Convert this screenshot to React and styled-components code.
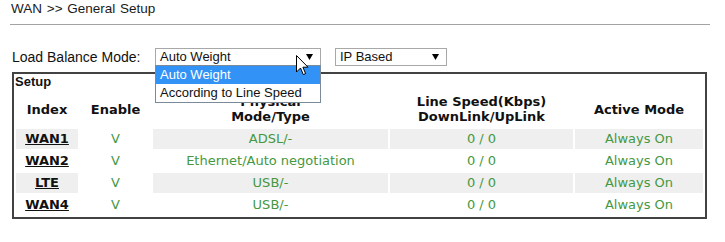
import React from "react";
import styled, { createGlobalStyle } from "styled-components";

const GlobalStyle = createGlobalStyle`
  html, body { margin: 0; padding: 0; background: #ffffff; }
  body { font-family: "Liberation Sans", Arial, sans-serif; }
`;

const Page = styled.div`
  width: 725px;
  height: 242px;
  position: relative;
  overflow: hidden;
`;

const Title = styled.div`
  padding: 1px 0 0 11px;
  font: 13.5px/16px "Liberation Sans", Arial, sans-serif;
  color: #1a1a1a;
  word-spacing: 1px;
`;

const Divider = styled.div`
  height: 1px;
  background: #a3a3a3;
  margin: 7px 15px 0 10px;
`;

const ModeRow = styled.div`
  display: flex;
  align-items: center;
  margin-top: 23px;
  padding-left: 12px;
  position: relative;
  z-index: 5;
`;

const Label = styled.div`
  width: 143px;
  font: 14px/18px "Liberation Sans", Arial, sans-serif;
  color: #111;
`;

const Select = styled.div`
  position: relative;
  box-sizing: border-box;
  width: ${(p) => p.$w}px;
  height: 18px;
  margin-left: ${(p) => p.$ml || 0}px;
  border: 1px solid #a8a8a8;
  background: #fff;
  display: flex;
  align-items: center;
  justify-content: space-between;
  padding: 0 7px 0 4px;
  font: 13px/16px "Liberation Sans", Arial, sans-serif;
  color: #111;
`;

const Arrow = styled.svg`
  width: 7px;
  height: 6px;
  flex: none;
`;

const DropList = styled.div`
  position: absolute;
  top: 100%;
  left: -1px;
  right: -1px;
  border: 1px solid #7a8a99;
  background: #fff;
`;

const Option = styled.div`
  height: 18px;
  padding-left: 4px;
  font: 13px/18px "Liberation Sans", Arial, sans-serif;
  color: ${(p) => (p.$active ? "#fff" : "#111")};
  background: ${(p) => (p.$active ? "#3392f5" : "#fff")};
`;

const Cursor = styled.svg`
  position: absolute;
  left: 296px;
  top: 55px;
  width: 13px;
  height: 21px;
  z-index: 20;
`;

const SetupBox = styled.div`
  margin: 6px 18px 0 12px;
  border: 2px solid #424242;
`;

const SetupLabel = styled.div`
  padding-left: 1px;
  font: bold 13px/15px "Liberation Sans", Arial, sans-serif;
  color: #111;
`;

const Table = styled.table`
  width: 100%;
  table-layout: fixed;
  border-collapse: separate;
  border-spacing: 2px;
`;

const Th = styled.th`
  height: 36px;
  padding: 0;
  vertical-align: middle;
  text-align: center;
  font: bold 13px/15px "DejaVu Sans", Verdana, sans-serif;
  color: #111;
`;

const Td = styled.td`
  height: 20px;
  padding: 0;
  text-align: center;
  vertical-align: middle;
  font: 13px/20px "DejaVu Sans", Verdana, sans-serif;
  color: #45983f;
  background: ${(p) => (p.$shade ? "#efefef" : "#ffffff")};
`;

const IndexLink = styled.a`
  font-weight: bold;
  color: #111;
  text-decoration: underline;
`;

const rows = [
  { idx: "WAN1", type: "ADSL/-" },
  { idx: "WAN2", type: "Ethernet/Auto negotiation" },
  { idx: "LTE", type: "USB/-" },
  { idx: "WAN4", type: "USB/-" },
];

const DownArrow = () => (
  <Arrow viewBox="0 0 7 6">
    <path d="M0 0 H7 L3.5 6 Z" fill="#000" />
  </Arrow>
);

export default function App() {
  return (
    <Page>
      <GlobalStyle />
      <Title>WAN &gt;&gt; General Setup</Title>
      <Divider />
      <ModeRow>
        <Label>Load Balance Mode:</Label>
        <Select $w={166}>
          <span>Auto Weight</span>
          <DownArrow />
          <DropList>
            <Option $active>Auto Weight</Option>
            <Option>According to Line Speed</Option>
          </DropList>
        </Select>
        <Select $w={112} $ml={14}>
          <span>IP Based</span>
          <DownArrow />
        </Select>
      </ModeRow>
      <SetupBox>
        <SetupLabel>Setup</SetupLabel>
        <Table>
          <colgroup>
            <col style={{ width: 62 }} />
            <col style={{ width: 71 }} />
            <col style={{ width: 235 }} />
            <col style={{ width: 183 }} />
            <col />
          </colgroup>
          <thead>
            <tr>
              <Th>Index</Th>
              <Th>Enable</Th>
              <Th>
                Physical
                <br />
                Mode/Type
              </Th>
              <Th>
                Line Speed(Kbps)
                <br />
                DownLink/UpLink
              </Th>
              <Th>Active Mode</Th>
            </tr>
          </thead>
          <tbody>
            {rows.map((r, i) => (
              <tr key={r.idx}>
                <Td $shade={i % 2 === 0}>
                  <IndexLink href="#">{r.idx}</IndexLink>
                </Td>
                <Td>V</Td>
                <Td $shade={i % 2 === 0}>{r.type}</Td>
                <Td $shade={i % 2 === 0}>0 / 0</Td>
                <Td $shade={i % 2 === 0}>Always On</Td>
              </tr>
            ))}
          </tbody>
        </Table>
      </SetupBox>
      <Cursor viewBox="0 0 13 21">
        <path
          d="M0.5 0.5 L0.5 17 L4.5 13 L7.3 19.6 L9.6 18.6 L6.9 12.2 L12 12.2 Z"
          fill="#fff"
          stroke="#000"
          strokeWidth="1"
          strokeLinejoin="miter"
        />
      </Cursor>
    </Page>
  );
}
